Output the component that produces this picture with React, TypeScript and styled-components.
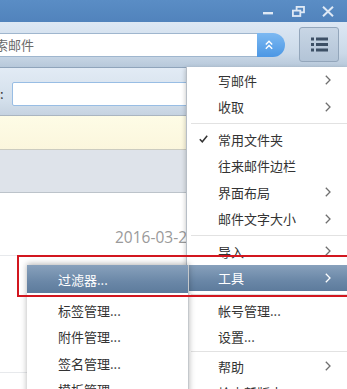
import React from 'react';
import styled, { createGlobalStyle } from 'styled-components';

const GlobalStyle = createGlobalStyle`
  html, body {
    margin: 0;
    padding: 0;
    background: #ffffff;
    overflow: hidden;
  }
  body {
    font-family: "Noto Sans CJK SC", "Noto Sans", sans-serif;
  }
`;

const Window = styled.div`
  position: relative;
  width: 347px;
  height: 389px;
  overflow: hidden;
  background: #ffffff;
`;

const TitleBar = styled.div`
  height: 22px;
  display: flex;
  justify-content: flex-end;
  align-items: center;
  padding-right: 4px;
  background: linear-gradient(#5a8dc5, #5183bc);
`;

const TitleControl = styled.div`
  width: 30px;
  height: 22px;
  display: flex;
  align-items: center;
  justify-content: center;
`;

const Toolbar = styled.div`
  height: 45px;
  display: flex;
  align-items: center;
  background: linear-gradient(#dde8f4, #cbd9e8 70%, #b7c8da);
  border-bottom: 1px solid #8fa4bb;
`;

const SearchBox = styled.div`
  margin-left: -30px;
  width: 315px;
  height: 24px;
  display: flex;
`;

const SearchField = styled.div`
  flex: 1;
  box-sizing: border-box;
  height: 24px;
  padding-left: 11px;
  border: 1px solid #9fb6ce;
  border-right: none;
  background: #ffffff;
  font-size: 13px;
  line-height: 22px;
  color: #6a6a6a;
`;

const SearchButton = styled.div`
  width: 28px;
  height: 24px;
  border-radius: 0 12px 12px 0;
  background: linear-gradient(#7cb9f2, #4c97e4);
  display: flex;
  align-items: center;
  justify-content: center;
  padding-right: 4px;
  box-sizing: border-box;
`;

const MenuButton = styled.div`
  margin-left: 14px;
  box-sizing: border-box;
  width: 40px;
  height: 35px;
  border: 1px solid #93a6bb;
  border-radius: 3px;
  background: linear-gradient(#c8d6e5, #b3c4d7);
  display: flex;
  align-items: center;
  justify-content: center;
`;

const FilterBar = styled.div`
  height: 48px;
  box-sizing: border-box;
  padding-top: 14px;
  display: flex;
  align-items: flex-start;
  background: linear-gradient(#e2ebf5, #d3dfeb 70%, #c6d3e1);
  border-bottom: 1px solid #aab5c0;
`;

const FilterLabel = styled.span`
  font-size: 13px;
  line-height: 24px;
  color: #333333;
`;

const FilterInput = styled.div`
  margin-left: 8px;
  width: 210px;
  height: 24px;
  box-sizing: border-box;
  border: 1px solid #98bde4;
  border-radius: 2px;
  background: #ffffff;
`;

const Notice = styled.div`
  height: 33px;
  background: linear-gradient(#fefce6, #fbf6dd);
  border-bottom: 1px solid #cbcbc0;
`;

const GroupBar = styled.div`
  height: 42px;
  background: #dee3ea;
  border-bottom: 1px solid #bcc3ca;
`;

const ListRow = styled.div<{ $height: number }>`
  height: ${(p) => p.$height}px;
  box-sizing: border-box;
  display: flex;
  flex-direction: column;
  justify-content: flex-end;
  padding: 0 0 8px 115px;
  border-bottom: 1px solid #e7e9ec;
`;

const DateText = styled.span`
  font-family: "Open Sans", "Noto Sans", sans-serif;
  font-size: 15.5px;
  line-height: 20px;
  color: #9a9a9a;
  white-space: nowrap;
`;

const Menu = styled.div`
  position: absolute;
  left: 186px;
  top: 67px;
  width: 161px;
  background: #ffffff;
  border-left: 1px solid #b7bec6;
  box-shadow: -1px 1px 4px rgba(0, 0, 0, 0.18);
  z-index: 2;
`;

const SubMenu = styled.div`
  position: absolute;
  left: 27px;
  top: 265px;
  width: 161px;
  background: #ffffff;
  border-right: 1px solid #c4c8cc;
  box-shadow: 0 -1px 6px rgba(0, 0, 0, 0.3);
  z-index: 3;
`;

const Item = styled.div<{ $active?: boolean; $height?: number; $after?: number }>`
  height: ${(p) => p.$height ?? 26.5}px;
  margin-bottom: ${(p) => p.$after ?? 0}px;
  display: flex;
  align-items: center;
  font-size: 13px;
  color: ${(p) => (p.$active ? '#ffffff' : '#333333')};
  background: ${(p) =>
    p.$active ? 'linear-gradient(#88a1bc, #6a87a7 60%, #5d7b9c)' : 'transparent'};
  white-space: nowrap;
`;

const Lead = styled.span`
  width: 31px;
  flex-shrink: 0;
  display: flex;
  justify-content: center;
  padding-left: 2px;
  box-sizing: border-box;
`;

const Label = styled.span`
  flex: 1;
`;

const Arrow = styled.span`
  width: 6px;
  margin-right: 17px;
  display: flex;
  align-items: center;
`;

const Separator = styled.div<{ $size?: number }>`
  height: ${(p) => p.$size ?? 6}px;
  display: flex;
  align-items: center;
  padding-left: 4px;

  &::after {
    content: '';
    flex: 1;
    height: 1px;
    background: #e2e2e2;
  }
`;

const Highlight = styled.div`
  position: absolute;
  left: 17px;
  top: 255px;
  width: 340px;
  height: 42px;
  box-sizing: border-box;
  border: 2px solid #d2161f;
  z-index: 4;
  pointer-events: none;
`;

const Chevron = ({ color = '#6f6f6f' }: { color?: string }) => (
  <svg width="6" height="10" viewBox="0 0 6 10">
    <polyline points="0.8,0.8 5,5 0.8,9.2" fill="none" stroke={color} strokeWidth="1.3" />
  </svg>
);

const Check = () => (
  <svg width="9" height="8" viewBox="0 0 9 8">
    <polyline points="0.8,4.2 3.3,6.8 8.2,0.8" fill="none" stroke="#333" strokeWidth="1.5" />
  </svg>
);

type Entry = { label: string; arrow?: boolean; check?: boolean; active?: boolean } | { sep: number };

const MENU: Entry[] = [
  { label: '写邮件', arrow: true },
  { label: '收取', arrow: true },
  { sep: 6 },
  { label: '常用文件夹', check: true },
  { label: '往来邮件边栏' },
  { label: '界面布局', arrow: true },
  { label: '邮件文字大小', arrow: true },
  { sep: 6 },
  { label: '导入', arrow: true },
  { label: '工具', arrow: true, active: true },
  { sep: 6 },
  { label: '帐号管理...' },
  { label: '设置...' },
  { sep: 3 },
  { label: '帮助', arrow: true },
  { label: '检查新版本...' },
];

const SUB_MENU = ['标签管理...', '附件管理...', '签名管理...', '模板管理...'];

const App = () => {
  return (
    <Window>
      <GlobalStyle />
      <TitleBar>
        <TitleControl>
          <svg width="10" height="10" viewBox="0 0 10 10">
            <rect x="0" y="6" width="10" height="2.4" fill="#dfe9f5" />
          </svg>
        </TitleControl>
        <TitleControl>
          <svg width="13" height="11" viewBox="0 0 13 11">
            <rect x="4.6" y="0.9" width="7.4" height="5.4" fill="none" stroke="#dfe9f5" strokeWidth="1.8" />
            <rect x="0.9" y="4.6" width="7.4" height="5.4" fill="#5687c0" stroke="#dfe9f5" strokeWidth="1.8" />
          </svg>
        </TitleControl>
        <TitleControl>
          <svg width="12" height="11" viewBox="0 0 12 11">
            <path d="M1 0.8 L11 10.2 M11 0.8 L1 10.2" stroke="#dfe9f5" strokeWidth="2" />
          </svg>
        </TitleControl>
      </TitleBar>

      <Toolbar>
        <SearchBox>
          <SearchField>搜索邮件</SearchField>
          <SearchButton>
            <svg width="8" height="10" viewBox="0 0 8 10">
              <polyline points="0.8,4.5 4,1.2 7.2,4.5" fill="none" stroke="#fff" strokeWidth="1.4" />
              <polyline points="0.8,8.8 4,5.5 7.2,8.8" fill="none" stroke="#fff" strokeWidth="1.4" />
            </svg>
          </SearchButton>
        </SearchBox>
        <MenuButton>
          <svg width="17" height="15" viewBox="0 0 17 15">
            <rect x="0" y="0.5" width="3" height="3" fill="#3d5066" />
            <rect x="5" y="0.5" width="12" height="3" fill="#3d5066" />
            <rect x="0" y="6" width="3" height="3" fill="#3d5066" />
            <rect x="5" y="6" width="12" height="3" fill="#3d5066" />
            <rect x="0" y="11.5" width="3" height="3" fill="#3d5066" />
            <rect x="5" y="11.5" width="12" height="3" fill="#3d5066" />
          </svg>
        </MenuButton>
      </Toolbar>

      <FilterBar>
        <FilterLabel>:</FilterLabel>
        <FilterInput />
      </FilterBar>
      <Notice />
      <GroupBar />

      <ListRow $height={63}>
        <DateText>2016-03-29 10:12</DateText>
      </ListRow>
      <ListRow $height={117} />

      <Menu>
        {MENU.map((entry, i) =>
          'sep' in entry ? (
            <Separator key={i} $size={entry.sep} />
          ) : (
            <Item key={i} $active={entry.active}>
              <Lead>{entry.check && <Check />}</Lead>
              <Label>{entry.label}</Label>
              <Arrow>{entry.arrow && <Chevron color={entry.active ? '#ffffff' : '#6f6f6f'} />}</Arrow>
            </Item>
          )
        )}
      </Menu>

      <SubMenu>
        <Item $active $height={28} $after={4}>
          <Lead />
          <Label>过滤器...</Label>
        </Item>
        {SUB_MENU.map((label) => (
          <Item key={label}>
            <Lead />
            <Label>{label}</Label>
          </Item>
        ))}
      </SubMenu>

      <Highlight />
    </Window>
  );
};

export default App;
